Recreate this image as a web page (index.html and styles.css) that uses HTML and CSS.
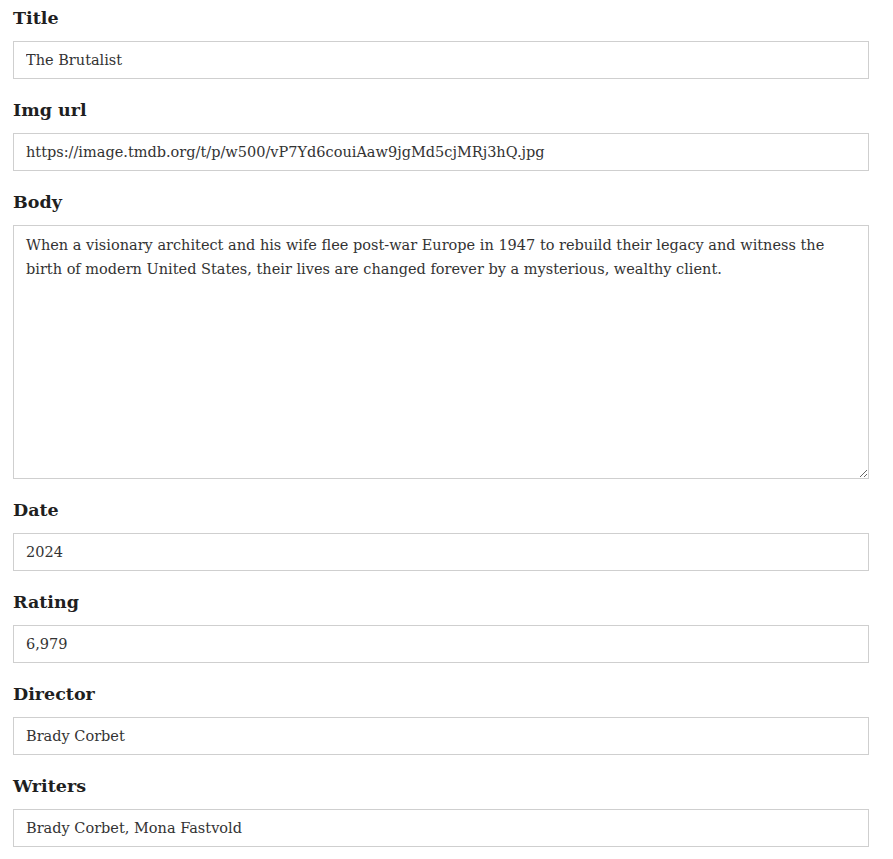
FILE: index.html
```html
<!DOCTYPE html>
<html lang="en">
<head>
<meta charset="utf-8">
<title>Edit movie</title>
<link rel="stylesheet" href="styles.css">
</head>
<body>
<form class="form">
  <div class="field">
    <label class="label" for="title">Title</label>
    <input class="input" id="title" type="text" value="The Brutalist">
  </div>
  <div class="field">
    <label class="label" for="img">Img url</label>
    <input class="input" id="img" type="text" value="https://image.tmdb.org/t/p/w500/vP7Yd6couiAaw9jgMd5cjMRj3hQ.jpg">
  </div>
  <div class="field">
    <label class="label" for="body">Body</label>
    <textarea class="input textarea" id="body">When a visionary architect and his wife flee post-war Europe in 1947 to rebuild their legacy and witness the birth of modern United States, their lives are changed forever by a mysterious, wealthy client.</textarea>
  </div>
  <div class="field">
    <label class="label" for="date">Date</label>
    <input class="input" id="date" type="text" value="2024">
  </div>
  <div class="field">
    <label class="label" for="rating">Rating</label>
    <input class="input" id="rating" type="text" value="6,979">
  </div>
  <div class="field">
    <label class="label" for="director">Director</label>
    <input class="input" id="director" type="text" value="Brady Corbet">
  </div>
  <div class="field">
    <label class="label" for="writers">Writers</label>
    <input class="input" id="writers" type="text" value="Brady Corbet, Mona Fastvold">
  </div>
</form>
</body>
</html>
```

FILE: styles.css
```css
html, body {
  margin: 0;
  background: #ffffff;
}
body {
  font-family: "DejaVu Serif", "Liberation Serif", serif;
  color: #222;
}
.form {
  display: flex;
  flex-direction: column;
  gap: 19px;
  padding: 6px 24px 0 13px;
}
.field {
  display: flex;
  flex-direction: column;
  gap: 11px;
}
.label {
  font-size: 17.5px;
  line-height: 24px;
  font-weight: bold;
  color: #1f1f1f;
}
.input {
  box-sizing: border-box;
  width: 100%;
  height: 38px;
  margin: 0;
  padding: 0 12px;
  border: 1px solid #cfcfcf;
  border-radius: 0;
  background: #fff;
  font-family: inherit;
  font-size: 14.5px;
  color: #333;
  outline: none;
}
.textarea {
  height: 254px;
  padding: 7px 12px;
  line-height: 24px;
  resize: vertical;
}
```
